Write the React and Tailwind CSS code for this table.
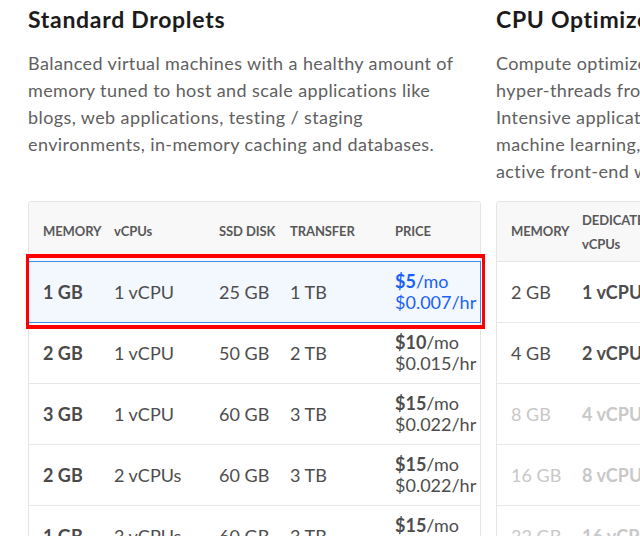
import React from "react";

const std = [
  { mem: "1 GB", cpu: "1 vCPU", ssd: "25 GB", tr: "1 TB", mo: "$5", hr: "$0.007/hr", sel: true },
  { mem: "2 GB", cpu: "1 vCPU", ssd: "50 GB", tr: "2 TB", mo: "$10", hr: "$0.015/hr" },
  { mem: "3 GB", cpu: "1 vCPU", ssd: "60 GB", tr: "3 TB", mo: "$15", hr: "$0.022/hr" },
  { mem: "2 GB", cpu: "2 vCPUs", ssd: "60 GB", tr: "3 TB", mo: "$15", hr: "$0.022/hr" },
  { mem: "1 GB", cpu: "3 vCPUs", ssd: "60 GB", tr: "3 TB", mo: "$15", hr: "$0.022/hr" },
];

const cpuRows = [
  { mem: "2 GB", cpu: "1 vCPU", off: false },
  { mem: "4 GB", cpu: "2 vCPUs", off: false },
  { mem: "8 GB", cpu: "4 vCPUs", off: true },
  { mem: "16 GB", cpu: "8 vCPUs", off: true },
  { mem: "32 GB", cpu: "16 vCPUs", off: true },
];

const grid = "grid grid-cols-[71px_105px_71px_105px_1fr] items-center";
const cell = "pl-[14px] whitespace-nowrap";

function StdTable() {
  return (
    <div className="relative w-[453px] border border-[#e5e5e5] rounded-[3px]">
      <div className={`${grid} h-[60px] bg-[#f8f8f8] border-b border-[#e5e5e5] rounded-t-[3px] text-[13px] font-bold text-[#595959] tracking-[-0.1px]`}>
        <div className={cell}>MEMORY</div>
        <div className={cell}>vCPUs</div>
        <div className={cell}>SSD DISK</div>
        <div className={cell}>TRANSFER</div>
        <div className={cell}>PRICE</div>
      </div>
      {std.map((r, i) => (
        <div
          key={i}
          className={`relative ${grid} h-[61px] border-b border-[#e8e8e8] text-[18px] ${r.sel ? "bg-[#f3f7fe]" : ""}`}
        >
          {r.sel && (
            <div className="absolute -left-px -right-px -top-px bottom-[-1px] border border-[#3d8bf2] pointer-events-none" />
          )}
          <div className={`${cell} font-bold text-[#4a4a4a]`}>{r.mem}</div>
          <div className={`${cell} text-[#4d4d4d]`}>{r.cpu}</div>
          <div className={`${cell} text-[#4d4d4d]`}>{r.ssd}</div>
          <div className={`${cell} text-[#4d4d4d]`}>{r.tr}</div>
          <div className={`${cell} leading-[21px] ${r.sel ? "text-[#1a62f5]" : "text-[#4d4d4d]"}`}>
            <div>
              <span className="font-bold">{r.mo}</span>/mo
            </div>
            <div>{r.hr}</div>
          </div>
        </div>
      ))}
      <div className="absolute left-[-3px] top-[52px] w-[459px] h-[75px] border-x-[3px] border-y-[4px] border-[#ff0000] pointer-events-none" />
    </div>
  );
}

function CpuTable() {
  return (
    <div className="w-[453px] border border-[#e5e5e5] rounded-[3px]">
      <div className="grid grid-cols-[71px_1fr] items-center h-[60px] bg-[#f8f8f8] border-b border-[#e5e5e5] rounded-t-[3px] text-[13px] font-bold text-[#595959] tracking-[-0.1px]">
        <div className={cell}>MEMORY</div>
        <div className="pl-[14px] leading-[24px]">
          <div>DEDICATED</div>
          <div>vCPUs</div>
        </div>
      </div>
      {cpuRows.map((r, i) => (
        <div
          key={i}
          className={`grid grid-cols-[71px_1fr] items-center h-[61px] border-b border-[#e8e8e8] text-[18px] ${r.off ? "text-[#c8c8c8]" : "text-[#4d4d4d]"}`}
        >
          <div className={cell}>{r.mem}</div>
          <div className={`${cell} font-bold`}>{r.cpu}</div>
        </div>
      ))}
    </div>
  );
}

function Column({ title, lines, children }) {
  return (
    <div className="w-[453px] shrink-0">
      <h2 className="pt-[5px] text-[23px] leading-[28px] font-bold tracking-[0.7px] text-[#1b1b1b] whitespace-nowrap">{title}</h2>
      <div className="mt-[17px] h-[135px] text-[18px] leading-[27px] tracking-[0.4px] text-[#606060]">
        {lines.map((l, i) => (
          <div key={i} className="whitespace-nowrap">{l}</div>
        ))}
      </div>
      <div className="mt-[16px]">{children}</div>
    </div>
  );
}

export default function App() {
  return (
    <div className="w-[640px] h-[536px] overflow-hidden bg-white font-['Lato',sans-serif]">
      <div className="flex gap-[15px] pl-[28px]">
        <Column
          title="Standard Droplets"
          lines={[
            "Balanced virtual machines with a healthy amount of",
            "memory tuned to host and scale applications like",
            "blogs, web applications, testing / staging",
            "environments, in-memory caching and databases.",
          ]}
        >
          <StdTable />
        </Column>
        <Column
          title="CPU Optimized Droplets"
          lines={[
            "Compute optimized virtual machines with dedicated",
            "hyper-threads from best in class Intel CPUs for CPU",
            "Intensive applications like CI/CD, video encoding,",
            "machine learning, ad serving, batch processing, and",
            "active front-end web servers.",
          ]}
        >
          <CpuTable />
        </Column>
      </div>
    </div>
  );
}
